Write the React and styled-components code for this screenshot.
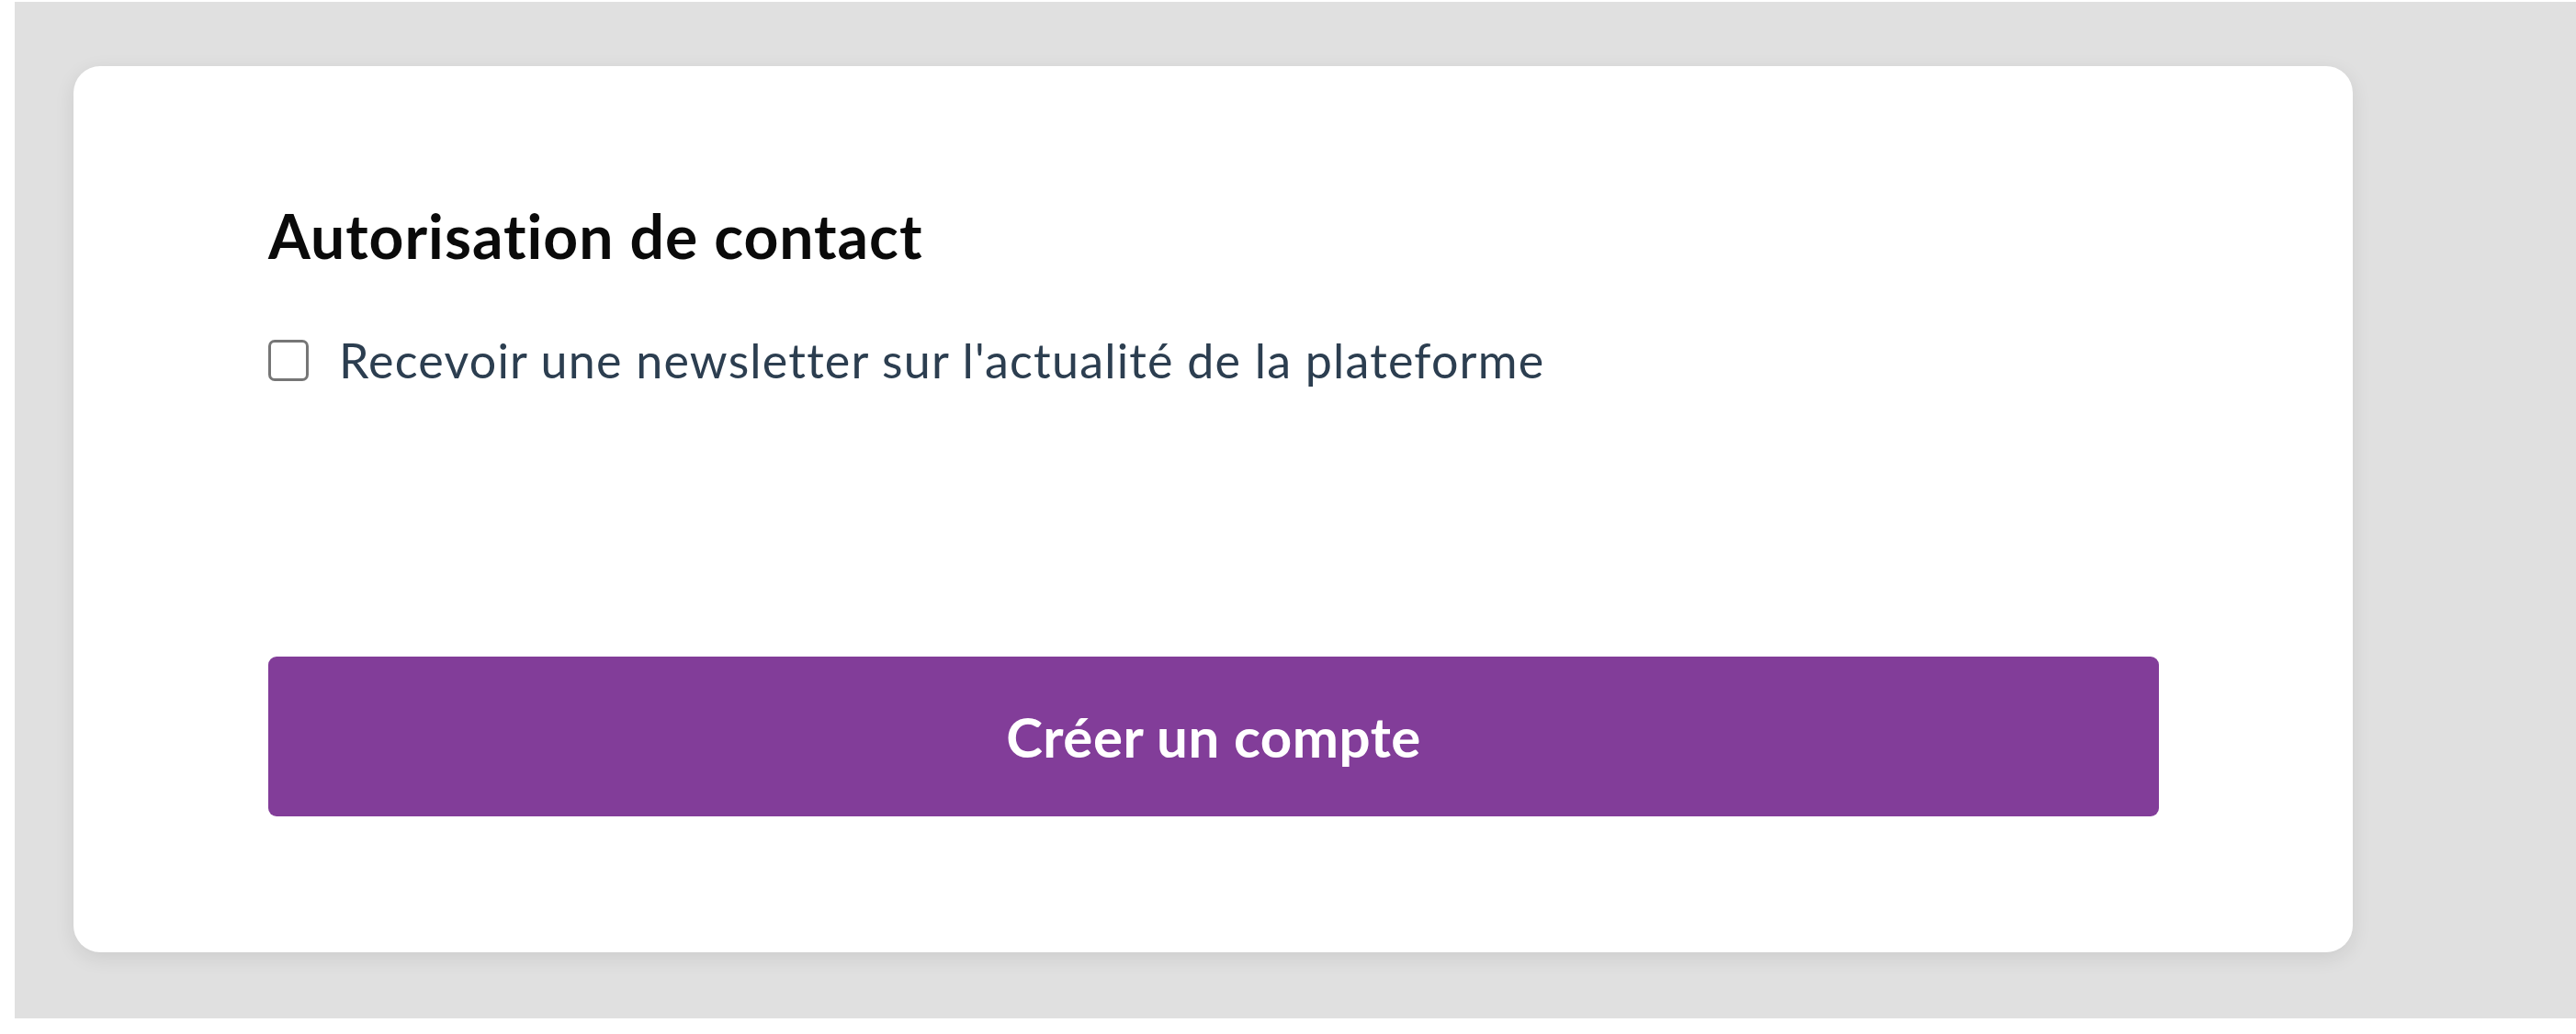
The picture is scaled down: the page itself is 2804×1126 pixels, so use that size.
import React, { useState } from 'react'
import styled, { createGlobalStyle } from 'styled-components'

const GlobalStyle = createGlobalStyle`
  html, body {
    margin: 0;
    padding: 0;
    background: #ffffff;
  }
  body {
    font-family: Lato, 'Noto Sans', 'Liberation Sans', sans-serif;
    font-variant-ligatures: none;
  }
`

const Backdrop = styled.div`
  margin: 2px 0 0 16px;
  height: 1107px;
  box-sizing: border-box;
  background: #e0e0e0;
  padding: 70px 0 0 64px;
`

const Card = styled.form`
  width: 2481px;
  height: 965px;
  box-sizing: border-box;
  background: #ffffff;
  border-radius: 29px;
  box-shadow: 0 6px 22px rgba(0, 0, 0, 0.09);
  padding: 145px 211px 148px 212px;
  display: flex;
  flex-direction: column;
`

const Title = styled.h2`
  margin: 0;
  font-size: 66px;
  line-height: 1.2;
  font-weight: 700;
  letter-spacing: 1px;
  color: #0a0a0a;
`

const CheckboxRow = styled.label`
  margin-top: 65px;
  display: flex;
  align-items: center;
  gap: 33px;
  font-size: 52px;
  line-height: 1.2;
  letter-spacing: 1.2px;
  color: #2c3e50;
  cursor: pointer;
`

const Box = styled.input.attrs({ type: 'checkbox' })`
  appearance: none;
  margin: 0;
  flex: none;
  width: 44px;
  height: 45px;
  box-sizing: border-box;
  border: 3px solid #767676;
  border-radius: 7px;
  background: #fff;
  cursor: pointer;
  &:checked {
    background: #823d99;
    border-color: #823d99;
  }
`

const SubmitButton = styled.button`
  margin-top: auto;
  width: 100%;
  height: 174px;
  border: none;
  border-radius: 9px;
  background: #823d99;
  color: #ffffff;
  font-family: inherit;
  font-size: 60px;
  font-weight: 700;
  letter-spacing: 0.5px;
  cursor: pointer;
`

export default function App() {
  const [newsletter, setNewsletter] = useState(false)

  return (
    <>
      <GlobalStyle />
      <Backdrop>
        <Card onSubmit={(e) => e.preventDefault()}>
          <Title>Autorisation de contact</Title>
          <CheckboxRow>
            <Box checked={newsletter} onChange={(e) => setNewsletter(e.target.checked)} />
            Recevoir une newsletter sur l'actualité de la plateforme
          </CheckboxRow>
          <SubmitButton type='submit'>Créer un compte</SubmitButton>
        </Card>
      </Backdrop>
    </>
  )
}
